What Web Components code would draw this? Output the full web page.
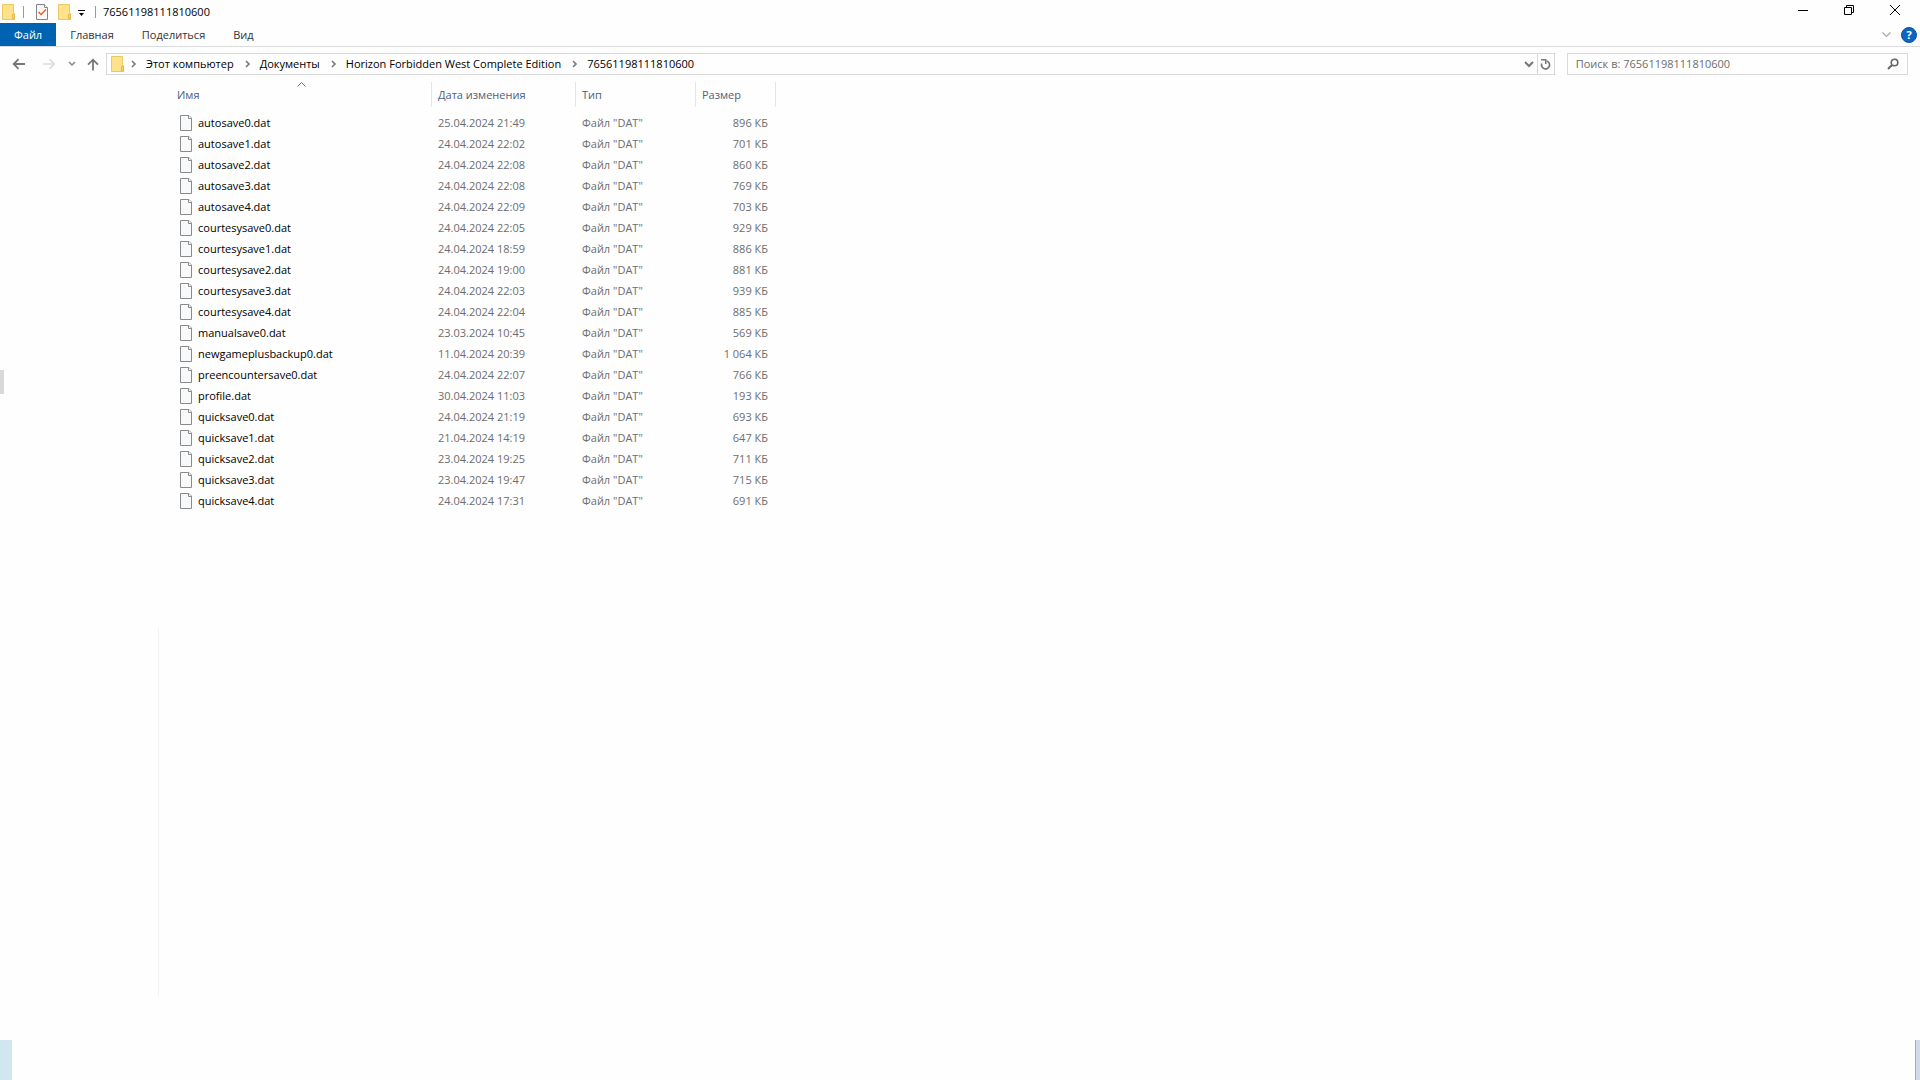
<!DOCTYPE html>
<html lang="ru">
<head>
<meta charset="utf-8">
<title>76561198111810600</title>
<style>
    body {
        margin: 0;
        background: #fefefe;
        color: #000;
        font: 11px/20px "Open Sans", "Noto Sans", sans-serif;
    }
</style>
</head>
<body>
<file-explorer></file-explorer>

<script>
const folderIcon = `
    <svg width="13" height="16" viewBox="0 0 13 16" aria-hidden="true">
        <path d="M.5.5h11v9h1v6H.5z" fill="#fde18b" stroke="#ebc860"/>
        <path d="M10.5 15V10.5h2V15z" fill="#fbd35f" stroke="#e3b94a"/>
    </svg>`;

const chevronRight = `
    <svg width="6" height="8" viewBox="0 0 6 8" aria-hidden="true">
        <path d="M1 1l3 3-3 3" fill="none" stroke="#777" stroke-width="1.6"/>
    </svg>`;

class FxTitlebar extends HTMLElement {
    constructor() {
        super();
        this.attachShadow({ mode: 'open' });
        this.shadowRoot.innerHTML = `
            <style>
                :host {
                    display: flex;
                    justify-content: space-between;
                    height: 23px;
                }

                .left, .window {
                    display: flex;
                }

                .left {
                    align-items: center;
                    padding-left: 2px;
                }

                button {
                    display: flex;
                    align-items: center;
                    justify-content: center;
                    border: 0;
                    padding: 0;
                    background: none;
                }

                .quick {
                    width: 22px;
                }

                .more {
                    width: 13px;
                    padding-top: 3px;
                }

                .rule {
                    width: 1px;
                    height: 12px;
                    margin: 0 7px;
                    background: #999;
                }

                .rule:first-of-type {
                    margin-left: 8px;
                }

                .window {
                    padding-right: 2px;
                    height: 20px;
                }

                .window button {
                    width: 46px;
                }
            </style>

            <div class="left">
                ${folderIcon}
                <span class="rule"></span>
                <button class="quick" aria-label="Свойства">
                    <svg width="12" height="16" viewBox="0 0 12 16">
                        <path d="M.5.5h8l3 3v12H.5z" fill="#f7f7f7" stroke="#858585"/>
                        <path d="M8.5.5v3h3" fill="#fff" stroke="#858585"/>
                        <path d="M2.500 8l2.500 2.500 5-5" fill="none" stroke="#e0622c" stroke-width="1.500"/>
                    </svg>
                </button>
                <button class="quick" aria-label="Новая папка">${folderIcon}</button>
                <button class="more" aria-label="Настройка">
                    <svg width="7" height="6" viewBox="0 0 7 6">
                        <path d="M0 0h7v1H0zM1 3h5L3.500 6z"/>
                    </svg>
                </button>
                <span class="rule"></span>
                <slot></slot>
            </div>
            <div class="window">
                <button aria-label="Свернуть">
                    <svg width="10" height="10" viewBox="0 0 10 10"><path d="M0 5h10v1H0z"/></svg>
                </button>
                <button aria-label="Восстановить">
                    <svg width="10" height="10" viewBox="0 0 10 10">
                        <path d="M.5 2.500h7v7h-7zM2.500 2V.5h7v7H8" fill="none" stroke="#000"/>
                    </svg>
                </button>
                <button aria-label="Закрыть">
                    <svg width="10" height="10" viewBox="0 0 10 10">
                        <path d="M0 0l10 10M10 0L0 10" fill="none" stroke="#000"/>
                    </svg>
                </button>
            </div>
        `;
    }
}

class FxRibbon extends HTMLElement {
    constructor() {
        super();
        this.attachShadow({ mode: 'open' });
        this.shadowRoot.innerHTML = `
            <style>
                :host {
                    display: flex;
                    justify-content: space-between;
                    height: 23px;
                    border-bottom: 1px solid #dadbdc;
                }

                nav, .tools {
                    display: flex;
                    align-items: center;
                }

                button {
                    height: 23px;
                    border: 0;
                    padding: 0 14px;
                    background: none;
                    color: #333;
                    font: inherit;
                }

                .file {
                    background: #0063b1;
                    color: #fff;
                }

                .tools {
                    gap: 10px;
                    padding-right: 3px;
                }

                .tools button {
                    display: flex;
                    align-items: center;
                    padding: 0;
                }

                .tools .help {
                    box-sizing: border-box;
                    justify-content: center;
                    width: 16px;
                    height: 16px;
                    border: 1px solid #0d5296;
                    border-radius: 50%;
                    background: #0a66c2;
                    color: #fff;
                    font-weight: bold;
                }
            </style>

            <nav>
                <button class="file">Файл</button>
                <button>Главная</button>
                <button>Поделиться</button>
                <button>Вид</button>
            </nav>
            <div class="tools">
                <button aria-label="Развернуть ленту">
                    <svg width="9" height="6" viewBox="0 0 9 6">
                        <path d="M.5.5l4 4 4-4" fill="none" stroke="#aaa" stroke-width="1.2"/>
                    </svg>
                </button>
                <button class="help" aria-label="Справка">?</button>
            </div>
        `;
    }
}

class FxCrumb extends HTMLElement {
    constructor() {
        super();
        this.attachShadow({ mode: 'open' });
        this.shadowRoot.innerHTML = `
            <style>
                :host {
                    display: flex;
                    align-items: center;
                    gap: 9px;
                }

                a {
                    color: inherit;
                    text-decoration: none;
                    white-space: nowrap;
                }
            </style>
            ${chevronRight}
            <a href="#"><slot></slot></a>
        `;
    }
}

class FxAddressbar extends HTMLElement {
    constructor() {
        super();
        this.attachShadow({ mode: 'open' });
        this.shadowRoot.innerHTML = `
            <style>
                :host {
                    display: flex;
                    align-items: center;
                    padding: 6px 12px 0 12px;
                }

                button {
                    display: flex;
                    align-items: center;
                    justify-content: center;
                    border: 0;
                    padding: 0;
                    background: none;
                    height: 20px;
                }

                .history {
                    display: flex;
                    align-items: center;
                    width: 94px;
                }

                .history button {
                    width: 14px;
                }

                .history .forward {
                    margin-left: 16px;
                }

                .history .recent {
                    margin: 0 7px 0 9px;
                }

                .path, .search {
                    box-sizing: border-box;
                    display: flex;
                    align-items: center;
                    height: 22px;
                    border: 1px solid #d9d9d9;
                }

                .path {
                    flex: 1;
                    padding-left: 4px;
                }

                .crumbs {
                    display: flex;
                    flex: 1;
                    gap: 11px;
                    padding-left: 7px;
                }

                .drop {
                    width: 15px;
                }

                .refresh {
                    width: 17px;
                    border-left: 1px solid #d9d9d9;
                }

                .search {
                    width: 18%;
                    margin-left: 12px;
                    padding: 0 8px;
                }

                input {
                    flex: 1;
                    min-width: 0;
                    border: 0;
                    padding: 0;
                    outline: 0;
                    background: none;
                    font: inherit;
                }

                input::placeholder {
                    color: #6d6d6d;
                }
            </style>

            <div class="history">
                <button aria-label="Назад">
                    <svg width="14" height="12" viewBox="0 0 14 12">
                        <path d="M13 6H2M6.500 1.200L1.700 6l4.800 4.800" fill="none" stroke="#777" stroke-width="1.800"/>
                    </svg>
                </button>
                <button class="forward" aria-label="Вперед">
                    <svg width="14" height="12" viewBox="0 0 14 12">
                        <path d="M1 6h11M7.500 1.200L12.300 6l-4.800 4.800" fill="none" stroke="#dadada" stroke-width="1.600"/>
                    </svg>
                </button>
                <button class="recent" aria-label="Последние расположения">
                    <svg width="8" height="6" viewBox="0 0 8 6">
                        <path d="M1 1l3 3 3-3" fill="none" stroke="#888" stroke-width="1.500"/>
                    </svg>
                </button>
                <button aria-label="Вверх">
                    <svg width="12" height="13" viewBox="0 0 12 13">
                        <path d="M6 12.500V2M1 6.700l5-5 5 5" fill="none" stroke="#777" stroke-width="1.800"/>
                    </svg>
                </button>
            </div>
            <div class="path">
                ${folderIcon}
                <div class="crumbs"><slot></slot></div>
                <button class="drop" aria-label="Предыдущие расположения">
                    <svg width="10" height="7" viewBox="0 0 10 7">
                        <path d="M1 1l4 4 4-4" fill="none" stroke="#777" stroke-width="2"/>
                    </svg>
                </button>
                <button class="refresh" aria-label="Обновить">
                    <svg width="11" height="12" viewBox="0 0 11 12">
                        <path d="M1.800 5.500A4 4 0 1 0 6.500 3" fill="none" stroke="#777" stroke-width="1.700"/>
                        <path d="M1 1.800h4.700V6" fill="none" stroke="#777" stroke-width="1.500"/>
                    </svg>
                </button>
            </div>
            <div class="search">
                <input type="text" aria-label="Поиск" placeholder="Поиск в: 76561198111810600">
                <button aria-label="Найти">
                    <svg width="12" height="12" viewBox="0 0 12 12">
                        <circle cx="7.500" cy="4.500" r="3.300" fill="none" stroke="#666" stroke-width="1.600"/>
                        <path d="M5 7L1 11" stroke="#666" stroke-width="2"/>
                    </svg>
                </button>
            </div>
        `;
    }
}

class FxFilelist extends HTMLElement {
    constructor() {
        super();
        this.attachShadow({ mode: 'open' });

        this._files = [
            ['autosave0.dat', '25.04.2024 21:49', '896 КБ'],
            ['autosave1.dat', '24.04.2024 22:02', '701 КБ'],
            ['autosave2.dat', '24.04.2024 22:08', '860 КБ'],
            ['autosave3.dat', '24.04.2024 22:08', '769 КБ'],
            ['autosave4.dat', '24.04.2024 22:09', '703 КБ'],
            ['courtesysave0.dat', '24.04.2024 22:05', '929 КБ'],
            ['courtesysave1.dat', '24.04.2024 18:59', '886 КБ'],
            ['courtesysave2.dat', '24.04.2024 19:00', '881 КБ'],
            ['courtesysave3.dat', '24.04.2024 22:03', '939 КБ'],
            ['courtesysave4.dat', '24.04.2024 22:04', '885 КБ'],
            ['manualsave0.dat', '23.03.2024 10:45', '569 КБ'],
            ['newgameplusbackup0.dat', '11.04.2024 20:39', '1 064 КБ'],
            ['preencountersave0.dat', '24.04.2024 22:07', '766 КБ'],
            ['profile.dat', '30.04.2024 11:03', '193 КБ'],
            ['quicksave0.dat', '24.04.2024 21:19', '693 КБ'],
            ['quicksave1.dat', '21.04.2024 14:19', '647 КБ'],
            ['quicksave2.dat', '23.04.2024 19:25', '711 КБ'],
            ['quicksave3.dat', '23.04.2024 19:47', '715 КБ'],
            ['quicksave4.dat', '24.04.2024 17:31', '691 КБ']
        ];

        this.shadowRoot.innerHTML = `
            <style>
                :host {
                    display: block;
                    padding: 7px 0 0 12px;
                }

                table {
                    border-collapse: separate;
                    border-spacing: 0;
                    table-layout: fixed;
                    width: 605px;
                }

                th {
                    box-sizing: border-box;
                    height: 25px;
                    border-right: 1px solid #e5e5e5;
                    padding: 0 6px;
                    color: #4c607a;
                    font-weight: normal;
                    text-align: left;
                }

                .name { width: 261px; }
                .date { width: 144px; }
                .type { width: 120px; }
                .size { width: 80px; }

                .name {
                    position: relative;
                }

                /* sits above the label, centred in the column */
                .sort {
                    position: absolute;
                    top: 0;
                    left: 0;
                    right: 0;
                    margin: 0 auto;
                }

                tbody::before {
                    content: "";
                    display: block;
                    height: 5px;
                }

                td {
                    height: 21px;
                    padding: 0 6px;
                    color: #6d6d6d;
                    white-space: nowrap;
                }

                td:first-child {
                    padding-left: 9px;
                    color: #000;
                }

                td:last-child {
                    padding-right: 8px;
                    text-align: right;
                }

                .file {
                    display: flex;
                    align-items: center;
                    gap: 6px;
                }
            </style>

            <table>
                <thead>
                    <tr>
                        <th class="name">Имя
                            <svg class="sort" width="9" height="5" viewBox="0 0 9 5">
                                <path d="M.5 4.500l4-4 4 4" fill="none" stroke="#777"/>
                            </svg>
                        </th>
                        <th class="date">Дата изменения</th>
                        <th class="type">Тип</th>
                        <th class="size">Размер</th>
                    </tr>
                </thead>
                <tbody>${this._files.map(this._row).join('')}</tbody>
            </table>
        `;
    }

    _row([name, date, size]) {
        return `
            <tr>
                <td>
                    <div class="file">
                        <svg width="12" height="16" viewBox="0 0 12 16" aria-hidden="true">
                            <path d="M.5.5H9L11.500 3v12.500H.5z" fill="#f8f9fa" stroke="#8a8a8a"/>
                            <path d="M8.500.5v3h3" fill="#fff" stroke="#8a8a8a"/>
                        </svg>
                        <span>${name}</span>
                    </div>
                </td>
                <td>${date}</td>
                <td>Файл "DAT"</td>
                <td>${size}</td>
            </tr>`;
    }
}

class FileExplorer extends HTMLElement {
    constructor() {
        super();
        this.attachShadow({ mode: 'open' });
        this.shadowRoot.innerHTML = `
            <style>
                :host {
                    display: flex;
                    flex-direction: column;
                    min-height: 100vh;
                }

                main {
                    display: flex;
                    flex: 1;
                }

                aside {
                    display: flex;
                    justify-content: space-between;
                    width: 159px;
                }

                .handle {
                    width: 4px;
                    height: 24px;
                    margin-top: 295px;
                    background: #d9d9d9;
                }

                .divider {
                    width: 1px;
                    margin: 553px 0 44px;
                    background: #f2f2f2;
                }

                fx-filelist {
                    flex: 1;
                }

                footer {
                    display: flex;
                    justify-content: space-between;
                    height: 40px;
                }

                .start {
                    width: 12px;
                    background: #d0e7ef;
                }

                .desktop {
                    width: 4px;
                    border-left: 1px solid #a3abb9;
                    background: #d3dbe9;
                }
            </style>

            <fx-titlebar>76561198111810600</fx-titlebar>
            <fx-ribbon></fx-ribbon>
            <fx-addressbar>
                <fx-crumb>Этот компьютер</fx-crumb>
                <fx-crumb>Документы</fx-crumb>
                <fx-crumb>Horizon Forbidden West Complete Edition</fx-crumb>
                <fx-crumb>76561198111810600</fx-crumb>
            </fx-addressbar>
            <main>
                <aside>
                    <div class="handle"></div>
                    <div class="divider"></div>
                </aside>
                <fx-filelist></fx-filelist>
            </main>
            <footer>
                <div class="start"></div>
                <div class="desktop"></div>
            </footer>
        `;
    }
}

customElements.define('fx-titlebar', FxTitlebar);
customElements.define('fx-ribbon', FxRibbon);
customElements.define('fx-crumb', FxCrumb);
customElements.define('fx-addressbar', FxAddressbar);
customElements.define('fx-filelist', FxFilelist);
customElements.define('file-explorer', FileExplorer);
</script>
</body>
</html>
